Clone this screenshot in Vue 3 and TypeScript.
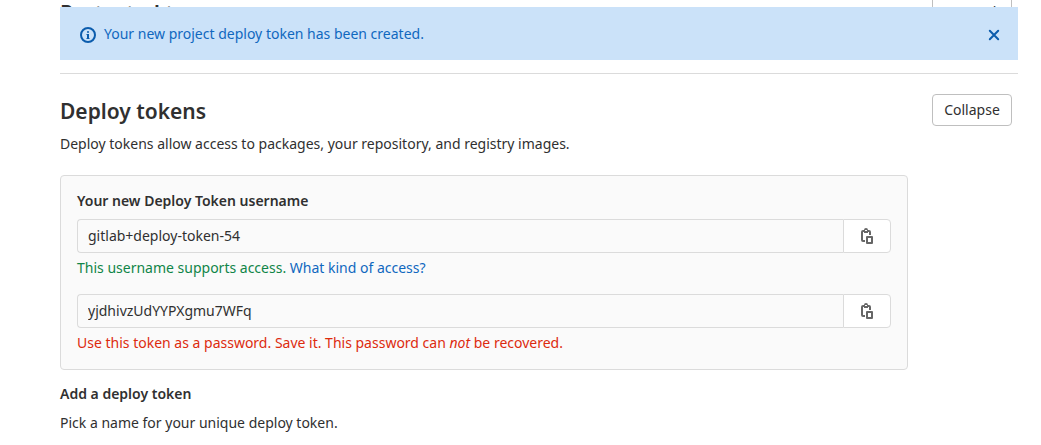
<script setup lang="ts">
import { ref } from 'vue'

interface Credential {
  id: string
  label: string
  value: string
}

const alertVisible = ref(true)
const username: Credential = {
  id: 'deploy-token-user',
  label: 'Your new Deploy Token username',
  value: 'gitlab+deploy-token-54',
}
const token: Credential = {
  id: 'deploy-token',
  label: 'Deploy token',
  value: 'yjdhivzUdYYPXgmu7WFq',
}
const clipboardPath =
  'M2 4a2 2 0 0 1 2-2h1a2 2 0 0 1 4 0h1a2 2 0 0 1 2 2v3h-2V4H9v1H5V4H4v8h2v2H4a2 2 0 0 1-2-2z' +
  'M6 2v1h2V2z' +
  'M7 9a1 1 0 0 1 1-1h5a1 1 0 0 1 1 1v6a1 1 0 0 1-1 1H8a1 1 0 0 1-1-1zM9 10v4h3v-4z'

function copy(text: string): void {
  navigator.clipboard?.writeText(text)
}
</script>

<template>
  <main class="page">
    <div v-if="alertVisible" class="alert" role="status">
      <svg class="icon" viewBox="0 0 16 16" aria-hidden="true">
        <circle cx="8" cy="8" r="7" fill="none" stroke="currentColor" stroke-width="2" />
        <circle cx="8" cy="5" r="1" fill="currentColor" />
        <path d="M6.5 7H9v4h.5v1h-3v-1H7V8h-.5z" fill="currentColor" />
      </svg>
      <span class="alert-text">Your new project deploy token has been created.</span>
      <button class="dismiss" type="button" aria-label="Dismiss" @click="alertVisible = false">
        <svg class="icon" viewBox="0 0 16 16" aria-hidden="true">
          <path d="M3.8 3.8l8.4 8.4M12.2 3.8l-8.4 8.4" fill="none" stroke="currentColor" stroke-width="2" stroke-linecap="round" />
        </svg>
      </button>
    </div>

    <section class="section previous">
      <header class="section-head">
        <h2>Protected tags</h2>
        <button class="toggle" type="button">Expand</button>
      </header>
    </section>

    <section class="section">
      <header class="section-head">
        <h2>Deploy tokens</h2>
        <button class="toggle" type="button">Collapse</button>
      </header>
      <p class="intro">Deploy tokens allow access to packages, your repository, and registry images.</p>

      <div class="content">
        <div class="card">
          <label class="label" :for="username.id">{{ username.label }}</label>
          <div class="group">
            <input :id="username.id" class="field" type="text" readonly :value="username.value" />
            <button class="copy" type="button" aria-label="Copy username" @click="copy(username.value)">
              <svg class="icon" viewBox="0 0 16 16" aria-hidden="true">
                <path fill="currentColor" fill-rule="evenodd" :d="clipboardPath" />
              </svg>
            </button>
          </div>
          <p class="hint success">This username supports access. <a href="#access">What kind of access?</a></p>

          <div class="group second">
            <input :id="token.id" class="field" type="text" readonly :aria-label="token.label" :value="token.value" />
            <button class="copy" type="button" aria-label="Copy deploy token" @click="copy(token.value)">
              <svg class="icon" viewBox="0 0 16 16" aria-hidden="true">
                <path fill="currentColor" fill-rule="evenodd" :d="clipboardPath" />
              </svg>
            </button>
          </div>
          <p class="hint danger">Use this token as a password. Save it. This password can <em>not</em> be recovered.</p>
        </div>

        <h3>Add a deploy token</h3>
        <p class="note">Pick a name for your unique deploy token.</p>
      </div>
    </section>
  </main>
</template>

<style>
body {
  margin: 0;
  background: #fff;
}
</style>

<style scoped>
.page {
  box-sizing: border-box;
  margin-top: -25px;
  padding: 0 23px 0 60px;
  font: 14px/20px "Noto Sans", sans-serif;
  color: #303030;
}
h2,
h3,
p {
  margin: 0;
}
button {
  font: inherit;
  cursor: pointer;
}
.icon {
  display: block;
  flex: none;
  width: 16px;
  height: 16px;
}
.alert {
  position: absolute;
  top: 7px;
  left: 60px;
  right: 23px;
  z-index: 1;
  box-sizing: border-box;
  display: flex;
  align-items: flex-start;
  gap: 8px;
  min-height: 53px;
  padding: 17px 16px 16px 20px;
  background: #cbe2f9;
  color: #1068bf;
}
.alert .icon {
  margin-top: 3px;
  color: #0b5cad;
}
.alert-text {
  flex: 1;
}
.dismiss {
  padding: 0;
  border: 0;
  background: none;
}
.section {
  border-top: 1px solid #dbdbdb;
}
.previous {
  min-height: 97px;
}
.section-head {
  display: flex;
  align-items: flex-start;
  justify-content: space-between;
  padding: 20px 6px 0 0;
}
h2 {
  padding-top: 4px;
  font-size: 21px;
  line-height: 26px;
  font-weight: 600;
}
.toggle {
  box-sizing: border-box;
  width: 80px;
  height: 32px;
  padding: 0;
  border: 1px solid #bfbfbf;
  border-radius: 4px;
  background: #fff;
  color: #303030;
}
.intro {
  margin-top: 8px;
}
.content {
  padding-right: 110px;
}
.card {
  margin-top: 21px;
  padding: 15px 16px 16px;
  border: 1px solid #dbdbdb;
  border-radius: 4px;
  background: #fafafa;
}
.label {
  display: block;
  margin-bottom: 8px;
  font-weight: 600;
}
.group {
  display: flex;
  height: 34px;
}
.group.second {
  margin-top: 16px;
}
.field {
  box-sizing: border-box;
  flex: 1;
  min-width: 0;
  padding: 0 10px;
  border: 1px solid #dbdbdb;
  border-right: 0;
  border-radius: 4px 0 0 4px;
  background: #fafafa;
  color: #303030;
  font: inherit;
}
.copy {
  box-sizing: border-box;
  display: flex;
  align-items: center;
  justify-content: center;
  width: 48px;
  padding: 0;
  border: 1px solid #dbdbdb;
  border-radius: 0 4px 4px 0;
  background: #fff;
  color: #666;
}
.hint {
  margin-top: 5px;
}
.success {
  color: #108548;
}
.danger {
  color: #dd2b0e;
}
a {
  color: #1068bf;
  text-decoration: none;
}
h3 {
  margin-top: 14px;
  font-size: 14px;
  line-height: 20px;
  font-weight: 600;
}
.note {
  margin-top: 9px;
}
</style>
